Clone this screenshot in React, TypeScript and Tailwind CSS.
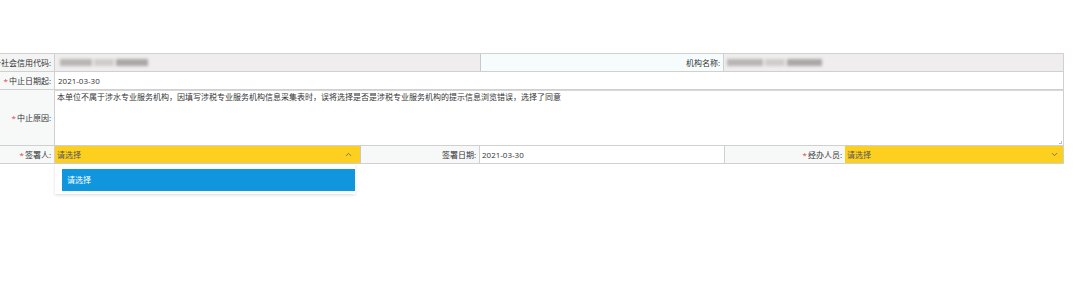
import React from 'react';
import { ChevronUp, ChevronDown } from 'lucide-react';

const font = { fontFamily: '"Open Sans", "Noto Sans CJK SC", sans-serif' };

function Label({ text, required, className = '' }: { text: string; required?: boolean; className?: string }) {
  return (
    <div className={`flex items-center justify-end overflow-hidden whitespace-nowrap pr-[3px] text-[8px] text-[#333] ${className}`}>
      {required && <span className="text-[#e4393c] mr-[1px]">*</span>}
      {text}:
    </div>
  );
}

function Blur({ w }: { w: number }) {
  return (
    <div className="flex items-center gap-[2px] blur-[1.5px]" style={{ width: w }}>
      <div className="h-[7px] flex-1 bg-[#b8b5b5]" />
      <div className="h-[7px] w-[20px] bg-[#cfcccc]" />
      <div className="h-[7px] flex-1 bg-[#aaa7a7]" />
    </div>
  );
}

export default function App() {
  return (
    <div className="w-[1080px] h-[291px] bg-white pt-[53px]" style={font}>
      <div className="w-[1064px] border-r border-[#d0d0d0] text-[8px] text-[#333]">
        {/* row 1 */}
        <div className="flex h-[19px] border-y border-[#d0d0d0]">
          <Label text="统一社会信用代码" className="w-[55px] bg-[#f4f4f4] border-r border-[#d0d0d0]" />
          <div className="w-[426px] bg-[#efeded] flex items-center pl-[5px] border-r border-[#c8c8c8]">
            <Blur w={88} />
          </div>
          <Label text="机构名称" className="w-[243px] bg-[#f6fcfc] border-r border-[#d0d0d0]" />
          <div className="flex-1 bg-[#efeded] flex items-center pl-[3px]">
            <Blur w={95} />
          </div>
        </div>
        {/* row 2 */}
        <div className="flex h-[18px] border-b border-[#d0d0d0]">
          <Label text="中止日期起" required className="w-[55px] bg-[#f7f9f9] border-r border-[#d0d0d0]" />
          <div className="flex-1 flex items-center pl-[3px] bg-white">2021-03-30</div>
        </div>
        {/* row 3 */}
        <div className="flex h-[56px] border-b border-[#d0d0d0]">
          <Label text="中止原因" required className="w-[55px] bg-[#f7f9f9] border-r border-[#d0d0d0]" />
          <div className="relative flex-1 bg-white pl-[2px] pt-[1px] leading-[10px] border-t border-[#d8d8d8]">
            本单位不属于涉水专业服务机构，因填写涉税专业服务机构信息采集表时，误将选择是否是涉税专业服务机构的提示信息浏览错误，选择了同意
            <div className="absolute right-[1px] bottom-[1px] w-[3px] h-[3px] border-r border-b border-[#bbb]" />
          </div>
        </div>
        {/* row 4 */}
        <div className="flex h-[18px] border-b border-[#d0d0d0]">
          <Label text="签署人" required className="w-[55px] bg-[#f7f9f9] border-r border-[#d0d0d0]" />
          <div className="relative w-[305px] bg-[#fdd020] flex items-center justify-between pl-[2px] pr-[7px] text-[#555]">
            <span>请选择</span>
            <ChevronUp className="w-[9px] h-[9px] text-[#555]" strokeWidth={2} />
            <div className="absolute left-0 top-[18px] w-[300px] h-[30px] bg-white shadow-[0_1px_3px_rgba(0,0,0,0.15)] pt-[5px] pl-[7px] z-10">
              <div className="h-[22px] bg-[#0f96dc] text-white flex items-center pl-[5px] text-[8px]">请选择</div>
            </div>
          </div>
          <Label text="签署日期" className="w-[120px] bg-[#f7f9f9] border-r border-[#d0d0d0] border-l border-l-[#c8c8c8]" />
          <div className="w-[245px] flex items-center pl-[2px] bg-white border-r border-[#d0d0d0]">2021-03-30</div>
          <Label text="经办人员" required className="w-[120px] bg-[#f7f9f9]" />
          <div className="flex-1 bg-[#fdd020] flex items-center justify-between pl-[2px] pr-[4px] text-[#555]">
            <span>请选择</span>
            <ChevronDown className="w-[9px] h-[9px] text-[#555]" strokeWidth={2} />
          </div>
        </div>
      </div>
    </div>
  );
}
